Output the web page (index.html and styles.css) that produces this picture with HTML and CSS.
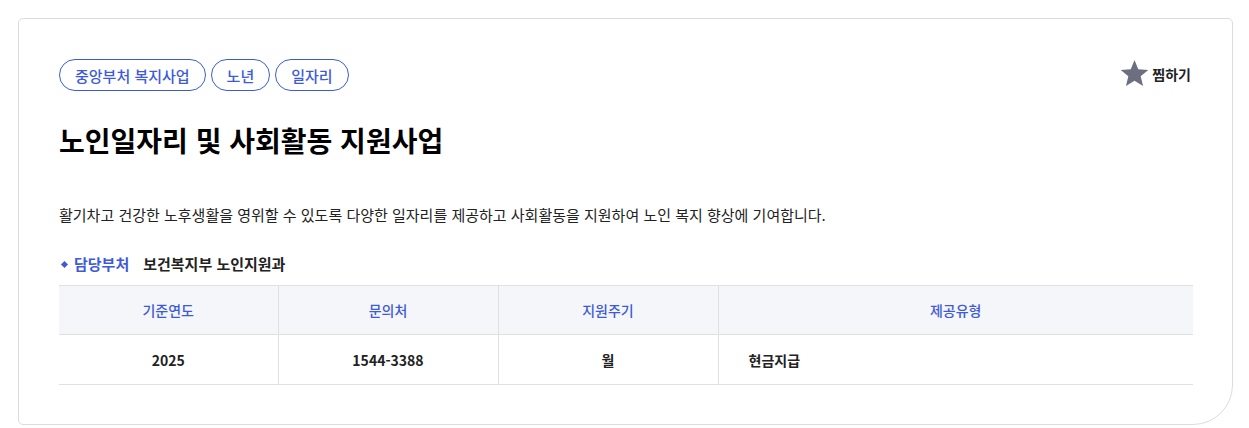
FILE: index.html
```html
<!DOCTYPE html>
<html lang="ko">
<head>
<meta charset="utf-8">
<link rel="stylesheet" href="styles.css">
</head>
<body>
<div class="card">
  <div class="top">
    <div class="tags">
      <span class="tag">중앙부처 복지사업</span>
      <span class="tag">노년</span>
      <span class="tag">일자리</span>
    </div>
    <button class="fav" type="button">
      <svg class="star" width="29" height="29" viewBox="0 0 24 24"><path d="M12 .8l3.1 7.6 8.3.6-6.3 5.3 2 8.1L12 18.1l-7.1 4.3 2-8.1L.6 9l8.3-.6z" fill="#6c6f80"/></svg>
      <span>찜하기</span>
    </button>
  </div>
  <h1 class="title">노인일자리 및 사회활동 지원사업</h1>
  <p class="desc">활기차고 건강한 노후생활을 영위할 수 있도록 다양한 일자리를 제공하고 사회활동을 지원하여 노인 복지 향상에 기여합니다.</p>
  <div class="dept">
    <span class="dept-label">담당부처</span>
    <span class="dept-value">보건복지부 노인지원과</span>
  </div>
  <table class="info">
    <thead>
      <tr><th class="c1">기준연도</th><th class="c2">문의처</th><th class="c3">지원주기</th><th>제공유형</th></tr>
    </thead>
    <tbody>
      <tr><td>2025</td><td>1544-3388</td><td>월</td><td class="left">현금지급</td></tr>
    </tbody>
  </table>
</div>
</body>
</html>
```

FILE: styles.css
```css
* { box-sizing: border-box; }
body {
  margin: 18px 16px 0 18px;
  background: #fff;
  font-family: "Noto Sans CJK KR", "Noto Sans", sans-serif;
  color: #222;
}
.card {
  border: 1px solid #dcdcdc;
  border-radius: 5px 5px 40px 5px;
  padding: 40px 39px 40px 40px;
  height: 407px;
}
.top {
  display: flex;
  justify-content: space-between;
  align-items: center;
}
.tags { display: flex; gap: 5px; }
.tag {
  display: inline-flex;
  align-items: center;
  height: 32px;
  padding: 0 15px;
  border: 1px solid #3d5bd9;
  border-radius: 16px;
  color: #3d5bd9;
  font-size: 15px;
  font-weight: 500;
}
.fav {
  display: flex;
  align-items: center;
  gap: 3px;
  background: none;
  border: 0;
  padding: 0 2px 3px 0;
  font-family: inherit;
  font-size: 14px;
  font-weight: 700;
  color: #222;
}
.star { display: block; }
.title {
  margin: 29px 0 0;
  font-size: 28px;
  line-height: 40px;
  font-weight: 700;
  color: #000;
  letter-spacing: 0;
}
.desc {
  margin: 44px 0 0;
  font-size: 15px;
  line-height: 22px;
  color: #222;
}
.dept {
  margin-top: 27px;
  display: flex;
  align-items: center;
  font-size: 15px;
  line-height: 22px;
  font-weight: 700;
}
.dept-label {
  position: relative;
  padding-left: 15px;
  color: #3d5bd9;
  margin-right: 14px;
}
.dept-label::before {
  content: "";
  position: absolute;
  left: 3px;
  top: 9px;
  width: 5px;
  height: 5px;
  background: #3d5bd9;
  transform: rotate(45deg);
}
.dept-value { color: #222; }
.info {
  margin-top: 10px;
  width: 100%;
  border-collapse: collapse;
  table-layout: fixed;
  font-size: 14px;
}
.info th, .info td {
  border: 1px solid #e0e0e0;
  border-left: 0;
  text-align: center;
}
.info th:last-child, .info td:last-child { border-right: 0; }
.info th {
  height: 49px;
  background: #f5f6fa;
  color: #3d5bd9;
  font-weight: 500;
}
.info td {
  height: 50px;
  font-weight: 700;
  color: #222;
}
.info td.left { text-align: left; padding-left: 30px; }
.c1 { width: 219px; }
.c2 { width: 220px; }
.c3 { width: 220px; }
```
